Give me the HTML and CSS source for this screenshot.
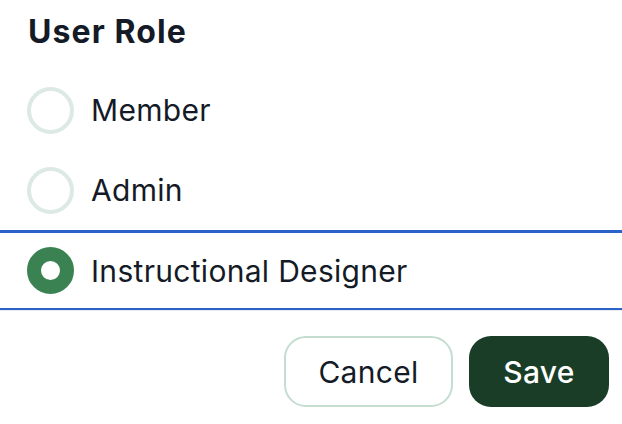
FILE: index.html
```html
<!DOCTYPE html>
<html>
<head>
<meta charset="utf-8">
<link rel="stylesheet" href="styles.css">
</head>
<body>
<div class="panel">
  <h1 class="title">User Role</h1>
  <div class="options">
    <label class="option"><span class="radio"></span><span class="label">Member</span></label>
    <label class="option"><span class="radio"></span><span class="label">Admin</span></label>
    <label class="option selected"><span class="radio checked"></span><span class="label">Instructional Designer</span></label>
  </div>
  <div class="actions">
    <button class="btn btn-cancel">Cancel</button>
    <button class="btn btn-save">Save</button>
  </div>
</div>
</body>
</html>
```
FILE: styles.css
```css
html, body {
  margin: 0;
  padding: 0;
  background: #ffffff;
}
body {
  font-family: Inter, "Noto Sans", sans-serif;
  color: #141b27;
}
.panel {
  width: 622px;
  height: 424px;
  overflow: hidden;
}
.title {
  margin: 0;
  padding: 12px 0 0 28px;
  height: 58px;
  box-sizing: border-box;
  font-size: 32px;
  line-height: 40px;
  font-weight: 700;
  letter-spacing: 1.1px;
}
.options {
  display: flex;
  flex-direction: column;
  border-bottom: 1px solid #e7edf0;
  margin-top: 12px;
}
.option {
  display: flex;
  align-items: center;
  gap: 17px;
  height: 80px;
  box-sizing: border-box;
  padding-left: 27px;
  font-size: 30px;
  letter-spacing: 0.3px;
}
.option.selected {
  border-top: 3px solid #2a62c9;
  border-bottom: 2px solid #2a62c9;
}
.radio {
  width: 47px;
  height: 47px;
  box-sizing: border-box;
  border-radius: 50%;
  border: 4px solid #dde9e4;
  flex: none;
}
.radio.checked {
  border: 14px solid #3a8252;
  background: #ffffff;
}
.actions {
  display: flex;
  justify-content: flex-end;
  gap: 16px;
  padding: 25px 13px 0 0;
}
.btn {
  font-family: Inter, "Noto Sans", sans-serif;
  font-size: 30px;
  letter-spacing: 0.3px;
  height: 71px;
  border-radius: 22px;
  box-sizing: border-box;
  cursor: pointer;
  padding: 0;
}
.btn-cancel {
  width: 169px;
  background: #ffffff;
  border: 2px solid #c4ddd0;
  color: #141b27;
}
.btn-save {
  width: 140px;
  background: #1a3d28;
  border: none;
  color: #ffffff;
  font-weight: 500;
}
```
